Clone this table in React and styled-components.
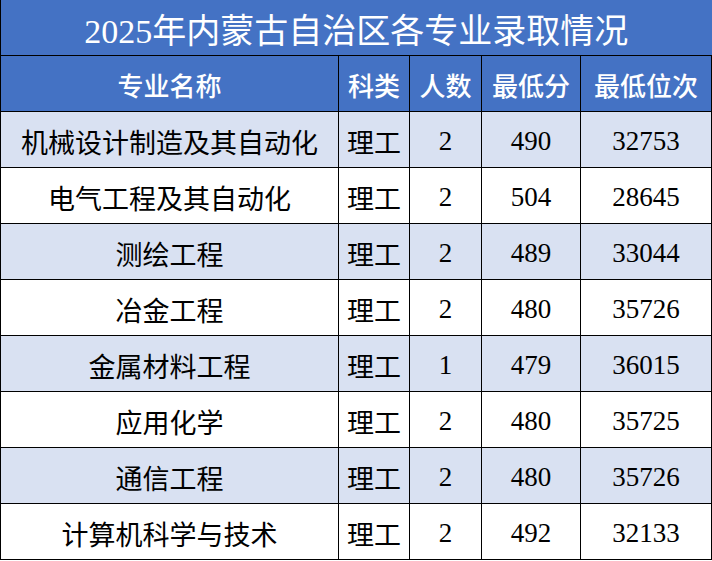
import React from 'react';
import styled, { createGlobalStyle } from 'styled-components';

const GlobalStyle = createGlobalStyle`
  html, body {
    margin: 0;
    padding: 0;
    background: #fff;
  }
`;

const Table = styled.table`
  border-collapse: collapse;
  table-layout: fixed;
  width: 711px;
  font-family: "Liberation Serif", "Noto Sans CJK SC", serif;
  color: #000;
`;

const Col = styled.col`
  width: ${p => p.w}px;
`;

const TitleCell = styled.th`
  height: 53px;
  padding: 2px 0 0;
  background: #4472c4;
  color: #fff;
  font-size: 34px;
  font-weight: 400;
  text-align: center;
  border-left: 1px solid #000;
  border-bottom: 1px solid #000;
`;

const HeadCell = styled.th`
  height: 53px;
  padding: 2px 0 0;
  background: #4472c4;
  color: #fff;
  font-family: "Noto Sans CJK SC", sans-serif;
  font-size: 26px;
  font-weight: 500;
  text-align: center;
  border: 1px solid #000;
  white-space: nowrap;
`;

const Row = styled.tr`
  background: ${p => (p.shaded ? '#d9e1f2' : '#fff')};
`;

const Cell = styled.td`
  height: 52px;
  padding: 3px 0 0;
  font-size: 27px;
  text-align: center;
  border: 1px solid #000;
  white-space: nowrap;
`;

const heads = ['专业名称', '科类', '人数', '最低分', '最低位次'];

const rows = [
  ['机械设计制造及其自动化', '理工', '2', '490', '32753'],
  ['电气工程及其自动化', '理工', '2', '504', '28645'],
  ['测绘工程', '理工', '2', '489', '33044'],
  ['冶金工程', '理工', '2', '480', '35726'],
  ['金属材料工程', '理工', '1', '479', '36015'],
  ['应用化学', '理工', '2', '480', '35725'],
  ['通信工程', '理工', '2', '480', '35726'],
  ['计算机科学与技术', '理工', '2', '492', '32133'],
];

export default function App() {
  return (
    <>
      <GlobalStyle />
      <Table>
        <colgroup>
          <Col w={338} />
          <Col w={71} />
          <Col w={72} />
          <Col w={99} />
          <Col w={131} />
        </colgroup>
        <thead>
          <tr>
            <TitleCell colSpan={5}>2025年内蒙古自治区各专业录取情况</TitleCell>
          </tr>
          <tr>
            {heads.map(h => (
              <HeadCell key={h}>{h}</HeadCell>
            ))}
          </tr>
        </thead>
        <tbody>
          {rows.map((r, i) => (
            <Row key={r[0]} shaded={i % 2 === 0}>
              {r.map((v, j) => (
                <Cell key={j}>{v}</Cell>
              ))}
            </Row>
          ))}
        </tbody>
      </Table>
    </>
  );
}
